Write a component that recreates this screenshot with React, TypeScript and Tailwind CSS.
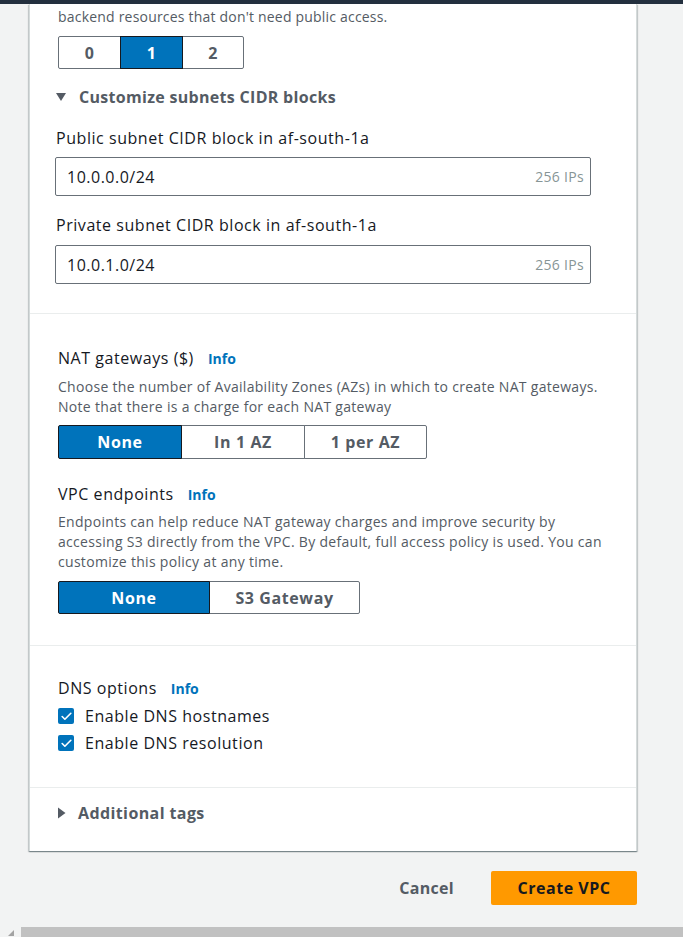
import { Check } from "lucide-react";

const font = "font-['Open_Sans',sans-serif]";

function Segmented({
  options,
  widths,
  selected,
  height,
}: {
  options: string[];
  widths: number[];
  selected: number;
  height: string;
}) {
  return (
    <div className={`flex ${height}`}>
      {options.map((opt, i) => {
        const isSel = i === selected;
        const first = i === 0;
        const last = i === options.length - 1;
        return (
          <div
            key={opt}
            style={{ width: widths[i] }}
            className={[
              "flex items-center justify-center text-[16px] font-bold tracking-[0.6px] border",
              first ? "rounded-l-[2px]" : "-ml-px",
              last ? "rounded-r-[2px]" : "",
              isSel
                ? "bg-[#0073bb] text-white border-[#16191f] z-10"
                : "bg-white text-[#545b64] border-[#687078]",
            ].join(" ")}
          >
            {opt}
          </div>
        );
      })}
    </div>
  );
}

function Info() {
  return <span className="ml-[14px] text-[14px] font-bold text-[#0073bb]">Info</span>;
}

function CidrInput({ value }: { value: string }) {
  return (
    <div className="flex items-center justify-between h-[39px] w-[536px] border border-[#687078] rounded-[2px] pl-[11px] pr-[6px] bg-white">
      <span className="text-[16px] tracking-[0.5px] text-[#16191f]">{value}</span>
      <span className="text-[14px] tracking-[0.3px] text-[#879596]">256 IPs</span>
    </div>
  );
}

function Checkbox({ label }: { label: string }) {
  return (
    <div className="flex items-center h-[24px]">
      <div className="w-[16px] h-[16px] rounded-[2px] bg-[#0073bb] flex items-center justify-center">
        <Check className="w-[13px] h-[13px] text-white" strokeWidth={3} />
      </div>
      <span className="ml-[11px] text-[16px] tracking-[0.55px] text-[#16191f]">{label}</span>
    </div>
  );
}

export default function App() {
  return (
    <div className={`h-[937px] w-[683px] bg-[#f2f3f3] flex flex-col overflow-hidden ${font}`}>
      <div className="h-[4px] bg-[#232f3e] shrink-0" />
      <div className="pl-[29px]">
        <div className="w-[608px] bg-white border-x border-[#d5dbdb] shadow-[0_1px_1px_0_rgba(0,28,36,0.3),1px_1px_1px_0_rgba(0,28,36,0.15),-1px_1px_1px_0_rgba(0,28,36,0.15)]">
          {/* subnets section */}
          <div className="pt-[3px] pb-[29px] pl-[28px] border-b border-[#eaeded]">
            <p className="text-[14px] leading-5 tracking-[0.2px] text-[#545b64]">
              backend resources that don't need public access.
            </p>
            <div className="mt-[9px]">
              <Segmented options={["0", "1", "2"]} widths={[63, 63, 62]} selected={1} height="h-[33px]" />
            </div>
            <div className="mt-[17px] flex items-center h-[22px] -ml-[3px]">
              <svg width="12" height="10" viewBox="0 0 12 10" className="mr-[12px]">
                <path d="M1 1h10L6 9z" fill="#545b64" />
              </svg>
              <span className="text-[16px] font-bold tracking-[0.3px] text-[#545b64]">Customize subnets CIDR blocks</span>
            </div>
            <div className="-ml-[2px]">
              <p className="mt-[19px] text-[16px] leading-[22px] tracking-[0.55px] text-[#16191f]">
                Public subnet CIDR block in af-south-1a
              </p>
              <div className="mt-[8px] -ml-[1px]">
                <CidrInput value="10.0.0.0/24" />
              </div>
              <p className="mt-[18px] text-[16px] leading-[22px] tracking-[0.55px] text-[#16191f]">
                Private subnet CIDR block in af-south-1a
              </p>
              <div className="mt-[9px] -ml-[1px]">
                <CidrInput value="10.0.1.0/24" />
              </div>
            </div>
          </div>

          {/* NAT + endpoints */}
          <div className="pt-[33px] pb-[31px] pl-[28px] border-b border-[#eaeded]">
            <div className="flex items-center h-[22px]">
              <span className="text-[16px] tracking-[0.55px] text-[#16191f]">NAT gateways ($)</span>
              <Info />
            </div>
            <p className="mt-[8px] text-[14px] leading-5 tracking-[0.3px] text-[#545b64] w-[550px]">
              Choose the number of Availability Zones (AZs) in which to create NAT gateways. Note that there is a charge for each NAT gateway
            </p>
            <div className="mt-[8px]">
              <Segmented options={["None", "In 1 AZ", "1 per AZ"]} widths={[124, 124, 123]} selected={0} height="h-[34px]" />
            </div>
            <div className="mt-[24px] flex items-center h-[22px]">
              <span className="text-[16px] tracking-[0.55px] text-[#16191f]">VPC endpoints</span>
              <Info />
            </div>
            <p className="mt-[7px] text-[14px] leading-5 tracking-[0.3px] text-[#545b64] w-[550px]">
              Endpoints can help reduce NAT gateway charges and improve security by accessing S3 directly from the VPC. By default, full access policy is used. You can customize this policy at any time.
            </p>
            <div className="mt-[9px]">
              <Segmented options={["None", "S3 Gateway"]} widths={[152, 151]} selected={0} height="h-[33px]" />
            </div>
          </div>

          {/* DNS */}
          <div className="pt-[31px] pb-[32px] pl-[28px] border-b border-[#eaeded]">
            <div className="flex items-center h-[22px]">
              <span className="text-[16px] tracking-[0.55px] text-[#16191f]">DNS options</span>
              <Info />
            </div>
            <div className="mt-[5px]">
              <Checkbox label="Enable DNS hostnames" />
            </div>
            <div className="mt-[3px]">
              <Checkbox label="Enable DNS resolution" />
            </div>
          </div>

          {/* tags */}
          <div className="pt-[14px] pb-[27px] pl-[27px]">
            <div className="flex items-center h-[22px]">
              <svg width="9" height="12" viewBox="0 0 9 12" className="mr-[12px]">
                <path d="M1 0.5v11L8.5 6z" fill="#545b64" />
              </svg>
              <span className="text-[16px] font-bold tracking-[0.4px] text-[#545b64]">Additional tags</span>
            </div>
          </div>
        </div>
      </div>

      {/* actions */}
      <div className="mt-[20px] flex items-center justify-end w-[637px]">
        <span className="text-[16px] font-bold tracking-[0.3px] text-[#545b64] mr-[37px]">Cancel</span>
        <div className="h-[34px] w-[146px] rounded-[2px] bg-[#ff9900] flex items-center justify-center text-[16px] font-bold tracking-[0.5px] text-[#16191f]">
          Create VPC
        </div>
      </div>

      <div className="flex-1" />
      <div className="h-[10px] flex shrink-0">
        <div className="w-[21px] flex items-end justify-center pb-[1px]">
          <svg width="6" height="6" viewBox="0 0 6 6">
            <path d="M6 0v6H0z" fill="#a3a3a3" />
          </svg>
        </div>
        <div className="flex-1 bg-[#c1c1c1]" />
      </div>
    </div>
  );
}
